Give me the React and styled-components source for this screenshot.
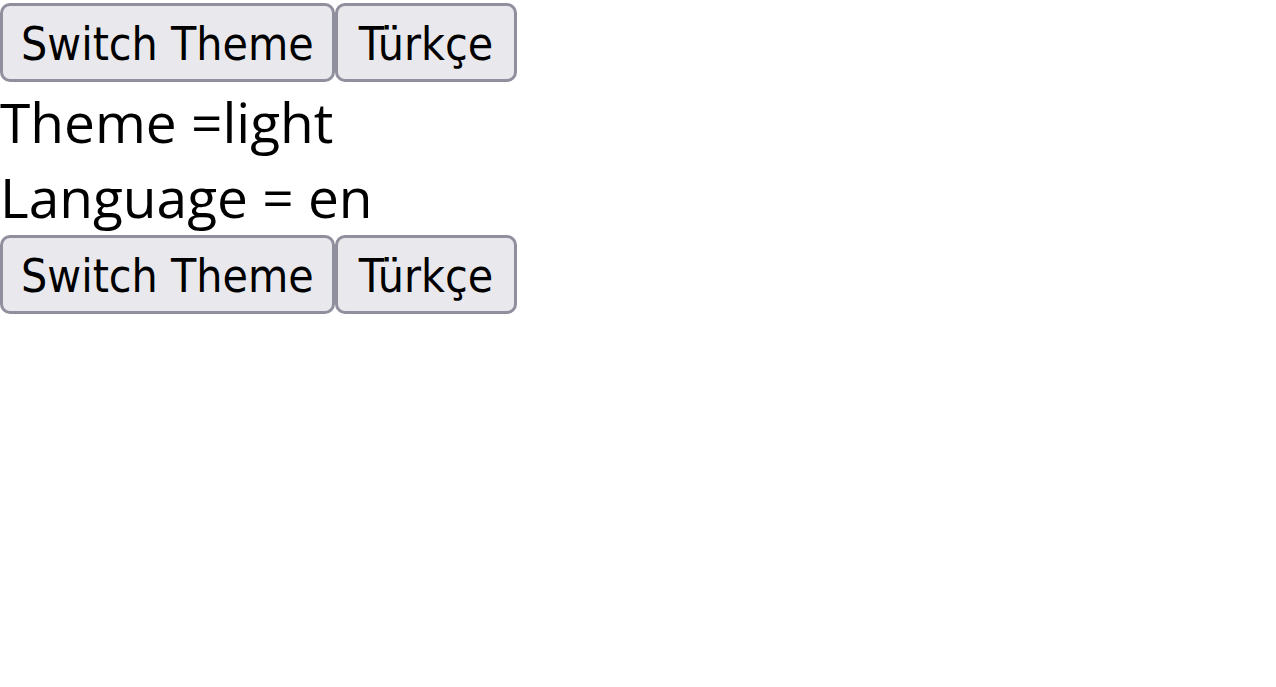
import React from "react";
import styled, { createGlobalStyle } from "styled-components";

const GlobalStyle = createGlobalStyle`
  body {
    margin: 0;
    background: #ffffff;
    color: #000000;
    font-family: "Open Sans", "Noto Sans", sans-serif;
  }
`;

const ButtonRow = styled.div`
  display: flex;
  gap: 0;
  height: ${(p) => p.$height}px;
  padding-top: ${(p) => p.$top}px;
  box-sizing: border-box;
`;

const Button = styled.button`
  height: 79px;
  box-sizing: border-box;
  padding: 2px ${(p) => p.$pad}px 0;
  border: 3px solid #8f8f9d;
  border-radius: 10px;
  background: #e9e9ed;
  color: #000000;
  font-family: "DejaVu Sans Condensed", "DejaVu Sans", sans-serif;
  font-size: 46px;
  line-height: 1;
  cursor: pointer;
`;

const Line = styled.div`
  font-size: 55px;
  line-height: 75px;
  white-space: pre;
`;

const Controls = ({ top, height }) => (
  <ButtonRow $top={top} $height={height}>
    <Button $pad={18}>Switch Theme</Button>
    <Button $pad={21}>Türkçe</Button>
  </ButtonRow>
);

const App = () => {
  const theme = "light";
  const language = "en";

  return (
    <div>
      <GlobalStyle />
      <Controls top={3} height={84} />
      <Line>Theme ={theme}</Line>
      <Line>Language = {language}</Line>
      <Controls top={1} height={80} />
    </div>
  );
};

export default App;
